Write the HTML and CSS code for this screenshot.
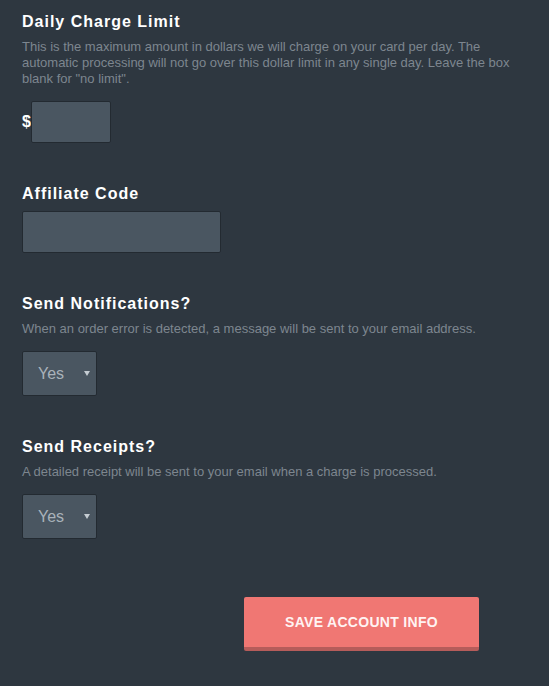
FILE: index.html
```html
<!DOCTYPE html>
<html lang="en">
<head>
    <meta charset="UTF-8">
    <meta name="viewport" content="width=device-width, initial-scale=1.0">
    <title>Account Settings</title>
    <link rel="stylesheet" href="styles.css">
</head>
<body>
    <form class="settings" id="accountForm">
        <div class="field">
            <h2>Daily Charge Limit</h2>
            <p>This is the maximum amount in dollars we will charge on your card per day. The automatic processing will not go over this dollar limit in any single day. Leave the box blank for "no limit".</p>
            <div class="money">
                <span class="currency">$</span>
                <input type="text" class="input input-small" name="dailyLimit">
            </div>
        </div>

        <div class="field">
            <h2>Affiliate Code</h2>
            <input type="text" class="input input-wide" name="affiliateCode">
        </div>

        <div class="field">
            <h2>Send Notifications?</h2>
            <p>When an order error is detected, a message will be sent to your email address.</p>
            <span class="select-wrap">
                <select name="notifications" class="select">
                    <option>Yes</option>
                    <option>No</option>
                </select>
            </span>
        </div>

        <div class="field">
            <h2>Send Receipts?</h2>
            <p>A detailed receipt will be sent to your email when a charge is processed.</p>
            <span class="select-wrap">
                <select name="receipts" class="select">
                    <option>Yes</option>
                    <option>No</option>
                </select>
            </span>
        </div>

        <div class="actions">
            <button type="button" class="save-btn">Save Account Info</button>
        </div>
    </form>
</body>
</html>
```

FILE: styles.css
```css
html, body {
    background-color: #2e3740;
}
body {
    margin: 0;
    padding: 12px 22px 0 22px;
    font-family: "Liberation Sans", Arial, sans-serif;
}
.settings {
    width: 500px;
}
.field {
    margin-bottom: 41px;
}
h2 {
    margin: 0 0 7px 0;
    font-size: 16px;
    line-height: 20px;
    font-weight: bold;
    letter-spacing: 1px;
    color: #fff;
}
p {
    margin: 1px 0 14px 0;
    font-size: 13px;
    line-height: 16px;
    color: #7d868f;
}
.money {
    display: flex;
    align-items: center;
}
.currency {
    font-size: 16px;
    font-weight: bold;
    color: #fff;
}
.input {
    display: block;
    height: 42px;
    margin: 0;
    padding: 0 10px;
    border: 1px solid #232a31;
    border-radius: 2px;
    background-color: #4a5661;
    color: #d0d6dc;
    font-family: inherit;
    font-size: 16px;
    box-sizing: border-box;
    outline: none;
}
.input-small {
    width: 80px;
}
.input-wide {
    width: 199px;
}
.select-wrap {
    position: relative;
    display: inline-block;
    vertical-align: top;
}
.select-wrap::after {
    content: "";
    position: absolute;
    right: 7px;
    top: 20px;
    border-left: 3px solid transparent;
    border-right: 3px solid transparent;
    border-top: 5px solid #c5ccd2;
    pointer-events: none;
}
.select {
    display: block;
    width: 75px;
    height: 45px;
    margin: 0;
    padding: 0 0 0 15px;
    border: 1px solid #232a31;
    border-radius: 2px;
    background-color: #4a5661;
    color: #a9b2ba;
    font-family: inherit;
    font-size: 16px;
    box-sizing: border-box;
    -webkit-appearance: none;
    appearance: none;
    outline: none;
}
.actions {
    padding: 17px 0 0 222px;
}
.save-btn {
    width: 235px;
    height: 54px;
    padding: 0;
    border: none;
    border-bottom: 4px solid #b65c5a;
    border-radius: 2px;
    background-color: #f07773;
    color: #fff3f2;
    font-family: inherit;
    font-size: 14px;
    font-weight: bold;
    letter-spacing: 0.3px;
    text-transform: uppercase;
    cursor: pointer;
}
.save-btn:hover {
    background-color: #ee6d69;
}
```
